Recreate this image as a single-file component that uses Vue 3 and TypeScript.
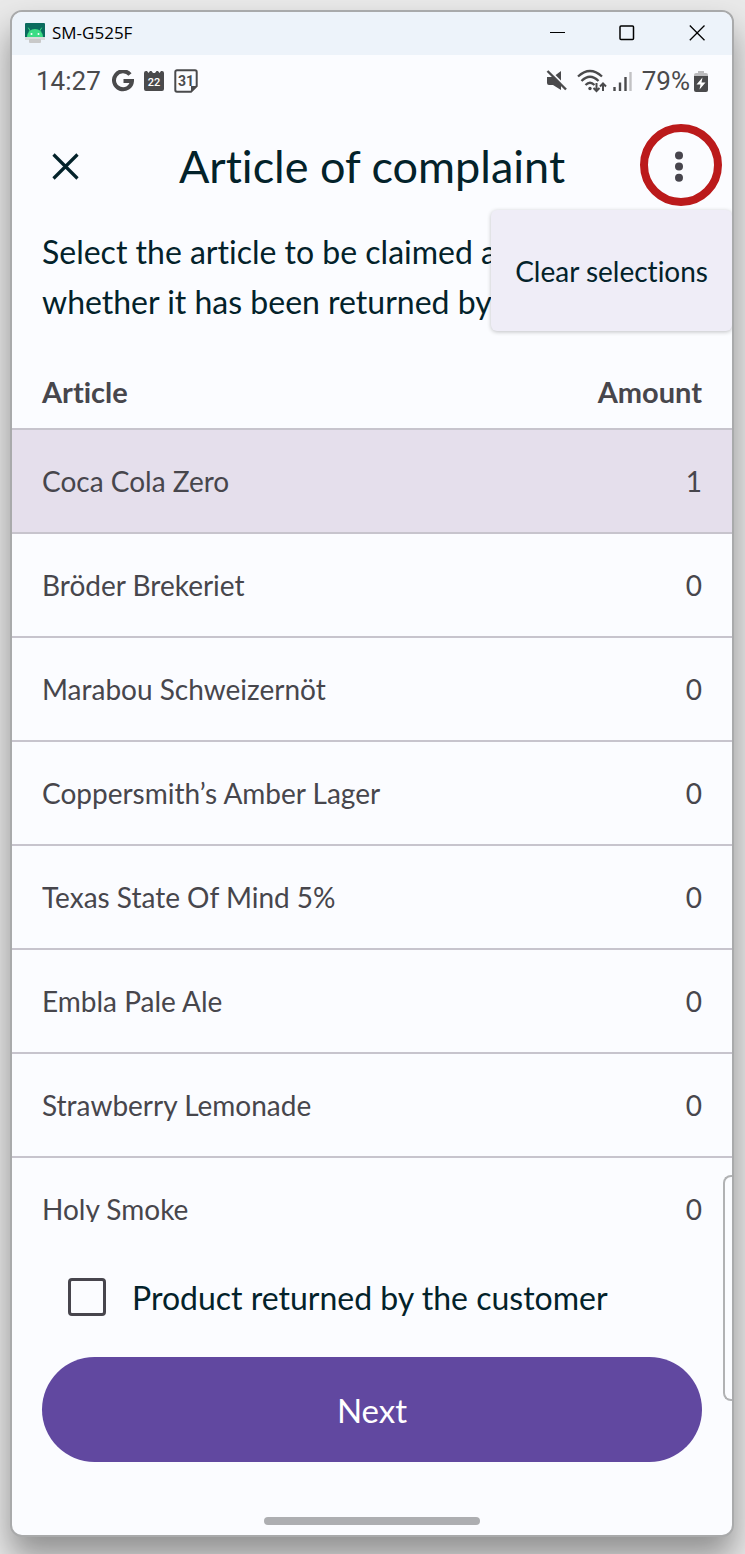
<script setup lang="ts">
import { ref } from 'vue'

interface Article {
  name: string
  amount: number
}

const articles: Article[] = [
  { name: 'Coca Cola Zero', amount: 1 },
  { name: 'Bröder Brekeriet', amount: 0 },
  { name: 'Marabou Schweizernöt', amount: 0 },
  { name: 'Coppersmith’s Amber Lager', amount: 0 },
  { name: 'Texas State Of Mind 5%', amount: 0 },
  { name: 'Embla Pale Ale', amount: 0 },
  { name: 'Strawberry Lemonade', amount: 0 },
  { name: 'Holy Smoke', amount: 0 },
]

const returned = ref(false)
</script>

<template>
  <div class="desktop">
    <div class="window">
      <header class="titlebar">
        <svg class="app-icon" width="20" height="20" viewBox="0 0 20 20" aria-hidden="true">
          <rect width="20" height="15" rx="1" fill="#0b6b5e" />
          <rect y="14" width="20" height="3" fill="#d9dcdb" />
          <rect x="4" y="16" width="12" height="4" rx="1" fill="#c9c9c9" />
          <path d="M2 14a8 8 0 0 1 16 0z" fill="#3ddc84" />
          <path d="M5.5 8.5L3.5 5M14.500 8.500L16.500 5" stroke="#3ddc84" stroke-width="1" stroke-linecap="round" />
          <circle cx="6.500" cy="11" r="1" fill="#fff" />
          <circle cx="13.500" cy="11" r="1" fill="#fff" />
        </svg>
        <span class="device">SM-G525F</span>
        <div class="controls">
          <button type="button" aria-label="Minimize">
            <svg width="16" height="16" viewBox="0 0 16 16"><path d="M1 7.500H16" stroke="#000" /></svg>
          </button>
          <button type="button" aria-label="Maximize">
            <svg width="16" height="16" viewBox="0 0 16 16"><rect x="1" y="1" width="13.500" height="13.500" rx="1" fill="none" stroke="#000" stroke-width="1.500" /></svg>
          </button>
          <button type="button" aria-label="Close window">
            <svg width="16" height="16" viewBox="0 0 16 16"><path d="M.8.5l14.700 14.700M15.500.5l-14.700 14.700" stroke="#000" stroke-width="1.300" /></svg>
          </button>
        </div>
      </header>

      <div class="status">
        <span class="clock">14:27</span>
        <svg width="22" height="22" viewBox="0 0 22 22" aria-hidden="true">
          <path d="M18 4.600A9 9 0 1 0 20 11H11.500" fill="none" stroke="#4a4a4c" stroke-width="4" />
        </svg>
        <svg width="20" height="22" viewBox="0 0 20 22" aria-hidden="true">
          <path d="M0 3a2 2 0 0 1 2-2H3L4.500 3 6 1H7.500L9 3H11L12.500 1H14L15.500 3 17 1H18a2 2 0 0 1 2 2V19a2 2 0 0 1-2 2H2a2 2 0 0 1-2-2z" fill="#4a4a4c" />
          <text x="10" y="16" text-anchor="middle" font-size="11" font-weight="500" fill="#fff">22</text>
        </svg>
        <svg width="24" height="24" viewBox="0 0 24 24" aria-hidden="true">
          <path d="M3 1.300H21a1.700 1.700 0 0 1 1.700 1.700V17L17 22.700H3A1.700 1.700 0 0 1 1.300 21V3A1.700 1.700 0 0 1 3 1.300z" fill="none" stroke="#4a4a4c" stroke-width="2" />
          <path d="M17 22.700V17H22.700z" fill="#4a4a4c" />
          <text x="12" y="17" text-anchor="middle" font-size="14" font-weight="700" fill="#4a4a4c">31</text>
        </svg>
        <span class="spacer"></span>
        <svg width="21" height="22" viewBox="0 0 21 22" aria-hidden="true">
          <path d="M1 7H7L15 1V20L7 15H3a2 2 0 0 1-2-2z" fill="#4a4a4c" />
          <path d="M3 0L21 18" stroke="#fafbfe" stroke-width="2" />
          <path d="M1.500 1L20 19.500" stroke="#4a4a4c" stroke-width="2.400" />
        </svg>
        <svg class="wifi" width="30" height="24" viewBox="0 0 30 24" aria-hidden="true">
          <g fill="none" stroke="#4a4a4c" stroke-width="2.300">
            <path d="M1 7.500Q13-3.500 25 7.500M4.500 12Q13 3.500 21.500 12M8.500 16Q13 11.500 17.500 16" />
            <path d="M19.500 14V22M16.500 19l3 3 3-3M26 22V14M23 17.500l3-3 3 3" stroke-width="2" />
          </g>
          <circle cx="13" cy="19.500" r="1.700" fill="#4a4a4c" />
        </svg>
        <svg width="19" height="20" viewBox="0 0 19 20" aria-hidden="true">
          <path d="M1.500 16V20M7 11.500V20M12.500 6V20" stroke="#4a4a4c" stroke-width="2.400" />
          <path d="M17.500 1V20" stroke="#c2c2c4" stroke-width="2.400" />
        </svg>
        <span class="battery-level">79%</span>
        <svg width="14" height="21" viewBox="0 0 14 21" aria-hidden="true">
          <path d="M4 0H10V2H12a2 2 0 0 1 2 2V6H0V4a2 2 0 0 1 2-2H4z" fill="#bcbcbe" />
          <path d="M0 5H14V19a2 2 0 0 1-2 2H2a2 2 0 0 1-2-2z" fill="#4a4a4c" />
          <path d="M8.500 6.500L2.500 13.500H6.500L5.500 18.500 11.500 11.500H7.500z" fill="#fff" />
        </svg>
      </div>

      <div class="appbar">
        <button class="close" type="button" aria-label="Close">
          <svg width="28" height="28" viewBox="0 0 28 28"><path d="M2.500 1.500L26.500 25.500M26.500 1.500L2.500 25.500" stroke="#03222a" stroke-width="3.200" /></svg>
        </button>
        <h1>Article of complaint</h1>
        <button class="more" type="button" aria-label="More options">
          <svg width="8" height="32" viewBox="0 0 8 32" fill="#47454d"><circle cx="4" cy="4.500" r="4" /><circle cx="4" cy="15.500" r="4" /><circle cx="4" cy="26.800" r="4" /></svg>
        </button>
        <span class="highlight"></span>
        <div class="menu">
          <button type="button">Clear selections</button>
        </div>
      </div>

      <p class="intro">Select the article to be claimed and<br />whether it has been returned by</p>

      <div class="list">
        <table>
          <thead>
            <tr>
              <th scope="col">Article</th>
              <th scope="col" class="amount">Amount</th>
            </tr>
          </thead>
          <tbody>
            <tr v-for="item in articles" :key="item.name" :class="{ selected: item.amount > 0 }">
              <td>{{ item.name }}</td>
              <td class="amount">{{ item.amount }}</td>
            </tr>
          </tbody>
        </table>
      </div>

      <footer class="footer">
        <label class="returned">
          <input v-model="returned" type="checkbox" />
          <span>Product returned by the customer</span>
        </label>
        <button class="next" type="button">Next</button>
        <div class="home-bar"></div>
      </footer>
      <span class="edge-panel"></span>
    </div>
  </div>
</template>

<style>
body {
  margin: 0;
  background: #e9e9e9;
}
</style>

<style scoped>
.desktop {
  box-sizing: border-box;
  height: 100vh;
  padding: 10px 11px 17px 10px;
  overflow: hidden;
  font-family: Lato, "Liberation Sans", sans-serif;
  font-variant-ligatures: none;
  color: #03222a;
}

button {
  padding: 0;
  border: 0;
  background: none;
  color: inherit;
  font: inherit;
  cursor: pointer;
}

svg {
  display: block;
  flex: none;
}

.window {
  position: relative;
  box-sizing: border-box;
  display: flex;
  flex-direction: column;
  height: 100%;
  border: 2px solid #a9aaab;
  border-radius: 12px;
  overflow: hidden;
  background: #fbfcff;
  box-shadow: 0 20px 32px rgba(0, 0, 0, 0.38);
}

.titlebar {
  box-sizing: border-box;
  display: flex;
  flex: none;
  align-items: center;
  height: 43px;
  padding: 0 0 2px 13px;
  background: #edf3fa;
}

.device {
  margin-left: 7px;
  color: #000;
  font: 17px/24px "Open Sans", "Noto Sans", sans-serif;
}

.controls {
  display: flex;
  margin-left: auto;
}

.controls button {
  display: grid;
  place-items: center;
  width: 70px;
  height: 41px;
}

.status {
  display: flex;
  flex: none;
  align-items: center;
  gap: 10px;
  height: 52px;
  padding: 0 24px;
  color: #4a4a4c;
  font: 26px/32px Roboto, sans-serif;
}

.clock {
  margin-right: 1px;
}

.spacer {
  flex: 1;
}

.wifi {
  margin-right: -4px;
}

.battery-level {
  margin-right: -6px;
}

.appbar {
  position: relative;
  display: flex;
  flex: none;
  align-items: center;
  justify-content: space-between;
  height: 120px;
  padding: 0 25px;
}

.close,
.more {
  display: grid;
  place-items: center;
  width: 56px;
  height: 56px;
}

h1 {
  margin: 0;
  padding-bottom: 2px;
  font-size: 45px;
  font-weight: 400;
  line-height: 56px;
}

.highlight {
  position: absolute;
  top: 17px;
  right: 10px;
  box-sizing: border-box;
  width: 82px;
  height: 82px;
  border: 8px solid #bb1a1b;
  border-radius: 50%;
  pointer-events: none;
}

.menu {
  position: absolute;
  top: 103px;
  right: 0;
  z-index: 1;
  border-radius: 6px;
  background: #efedf7;
  box-shadow: 0 1px 4px rgba(0, 0, 0, 0.24);
}

.menu button {
  height: 121px;
  padding: 0 24px;
  font-size: 28px;
  white-space: nowrap;
}

.intro {
  flex: none;
  margin: 0 30px 30px;
  font-size: 32px;
  line-height: 50px;
}

.list {
  flex: 1;
  min-height: 0;
  overflow-y: auto;
  scrollbar-width: none;
}

table {
  width: 100%;
  border-spacing: 0;
  color: #47464c;
  font-size: 28px;
  line-height: 36px;
}

th,
td {
  box-sizing: border-box;
  height: 104px;
  padding: 0 30px;
  border-bottom: 2px solid #c7c4cd;
  text-align: left;
}

th {
  height: 73px;
  padding-bottom: 2px;
  font-size: 29px;
  font-weight: 700;
}

.amount {
  text-align: right;
}

.selected {
  background: #e5dfec;
}

.footer {
  display: flex;
  flex: none;
  flex-direction: column;
  padding: 23px 30px 10px;
}

.returned {
  display: flex;
  align-items: center;
  gap: 26px;
  height: 104px;
  margin-bottom: 8px;
  padding-left: 26px;
  font-size: 32px;
}

.returned input {
  appearance: none;
  box-sizing: border-box;
  width: 38px;
  height: 38px;
  margin: 0;
  border: 3px solid #47454d;
  border-radius: 4px;
}

.returned input:checked {
  background: #6148a0;
}

.next {
  height: 105px;
  margin-bottom: 55px;
  border-radius: 53px;
  background: #6148a0;
  color: #fff;
  font-size: 33px;
}

.home-bar {
  align-self: center;
  width: 216px;
  height: 8px;
  border-radius: 4px;
  background: #adaeb1;
}

.edge-panel {
  position: absolute;
  right: 0;
  bottom: 134px;
  box-sizing: border-box;
  width: 9px;
  height: 226px;
  border: 2px solid #b1b2b4;
  border-right: 0;
  border-radius: 8px 0 0 8px;
  background: #fbfcff;
}
</style>
